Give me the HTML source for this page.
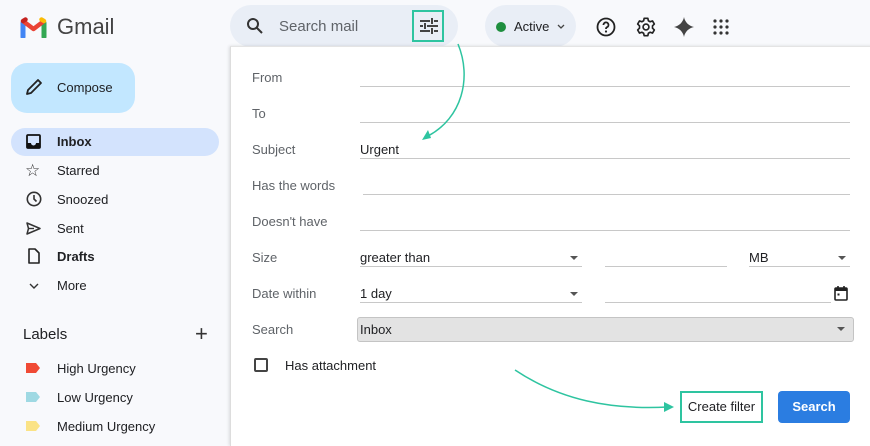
<!DOCTYPE html>
<html><head><meta charset="utf-8"><style>
*{margin:0;padding:0;box-sizing:border-box}
body{width:870px;height:442px;overflow:hidden;background:#f8f9fc;font-family:"Liberation Sans",Arial,sans-serif;position:relative;color:#202124}
.a{position:absolute}
.nav{position:absolute;left:57px;font-size:13px;color:#202124}
.ic{position:absolute;left:26px}
.lbl{position:absolute;left:252px;font-size:13px;color:#5f6368}
.ln{position:absolute;height:1px;background:#c8c8c8}
.val{position:absolute;font-size:13px;color:#202124}
.tri{position:absolute;width:0;height:0;border-left:4px solid transparent;border-right:4px solid transparent;border-top:4px solid #555}
</style></head><body>
<!-- logo -->
<svg class="a" style="left:20px;top:17px" width="27" height="21" viewBox="0 0 27 21">
<path d="M3 20V6" stroke="#4285f4" stroke-width="5" stroke-linecap="round"/>
<path d="M24 20V6" stroke="#34a853" stroke-width="5" stroke-linecap="round"/>
<path d="M3 4l10.5 8L24 4" fill="none" stroke="#ea4335" stroke-width="4.5" stroke-linejoin="round"/>
<path d="M21.5 2.5L24 4" stroke="#fbbc04" stroke-width="4.5" stroke-linecap="round"/>
<path d="M3 4L5.5 2.5" stroke="#c5221f" stroke-width="4.5" stroke-linecap="round"/>
</svg>
<div class="a" style="left:57px;top:14px;font-size:22px;color:#444">Gmail</div>
<!-- search -->
<div class="a" style="left:230px;top:5px;width:228px;height:42px;background:#e9eef6;border-radius:22px"></div>
<svg class="a" style="left:246px;top:17px" width="18" height="18" viewBox="0 0 18 18"><circle cx="7" cy="7" r="5" fill="none" stroke="#333" stroke-width="2"/><path d="M11 11l5 5" stroke="#333" stroke-width="2"/></svg>
<div class="a" style="left:279px;top:18px;font-size:15px;color:#5f6368">Search mail</div>
<div class="a" style="left:412px;top:10px;width:32px;height:32px;border:2px solid #2ec4a0"></div>
<svg class="a" style="left:420px;top:18px" width="18" height="16" viewBox="0 0 18 16" stroke="#444" stroke-width="2"><path d="M0 3h10M14 3h4M12 0v6M0 8h3M7 8h11M5 5v6M0 13h10M14 13h4M12 10v6"/></svg>
<!-- active -->
<div class="a" style="left:485px;top:5px;width:91px;height:42px;background:#e9eef6;border-radius:22px"></div>
<div class="a" style="left:496px;top:22px;width:10px;height:10px;border-radius:50%;background:#1e8e3e"></div>
<div class="a" style="left:514px;top:19px;font-size:13px;color:#202124">Active</div>
<svg class="a" style="left:557px;top:24px" width="8" height="5"><path d="M1 1l3 3 3-3" fill="none" stroke="#444" stroke-width="1.3"/></svg>
<svg class="a" style="left:596px;top:17px" width="20" height="20" viewBox="0 0 20 20"><circle cx="10" cy="10" r="8.5" fill="none" stroke="#222" stroke-width="1.8"/><path d="M7.5 8a2.5 2.5 0 1 1 3.5 2.2c-.8.4-1 .9-1 1.8" fill="none" stroke="#222" stroke-width="1.8"/><circle cx="10" cy="14.5" r="1.1" fill="#222"/></svg>
<svg class="a" style="left:635px;top:16px" width="22" height="22" viewBox="0 0 24 24">
<g fill="none" stroke="#222" stroke-width="1.8" stroke-linejoin="round">
<path d="M10 2.5h4l.6 2.7 1.9 1.1 2.6-.9 2 3.4-2 1.9v2.6l2 1.9-2 3.4-2.6-.9-1.9 1.1-.6 2.7h-4l-.6-2.7-1.9-1.1-2.6.9-2-3.4 2-1.9v-2.6l-2-1.9 2-3.4 2.6.9 1.9-1.1z"/>
<circle cx="12" cy="12" r="3.2"/></g></svg>
<svg class="a" style="left:674px;top:17px" width="20" height="20" viewBox="0 0 20 20"><path d="M10 0C10.8 5 15 9.2 20 10 15 10.8 10.8 15 10 20 9.2 15 5 10.8 0 10 5 9.2 9.2 5 10 0z" fill="#444"/></svg>
<svg class="a" style="left:713px;top:19px" width="16" height="16" viewBox="0 0 16 16" fill="#333"><circle cx="2" cy="2" r="1.6"/><circle cx="8" cy="2" r="1.6"/><circle cx="14" cy="2" r="1.6"/><circle cx="2" cy="8" r="1.6"/><circle cx="8" cy="8" r="1.6"/><circle cx="14" cy="8" r="1.6"/><circle cx="2" cy="14" r="1.6"/><circle cx="8" cy="14" r="1.6"/><circle cx="14" cy="14" r="1.6"/></svg>
<div class="a" style="left:230px;top:46px;width:640px;height:1px;background:#e4e4e4"></div>
<!-- sidebar -->
<div class="a" style="left:11px;top:63px;width:124px;height:50px;background:#c2e7ff;border-radius:16px"></div>
<svg class="a" style="left:25px;top:78px" width="18" height="18" viewBox="0 0 18 18"><path d="M2 16l1-4L13 2l3 3L6 15z" fill="none" stroke="#222" stroke-width="1.8" stroke-linejoin="round"/></svg>
<div class="a" style="left:57px;top:80px;font-size:13px;color:#202124">Compose</div>
<div class="a" style="left:11px;top:128px;width:208px;height:28px;background:#d3e3fd;border-radius:14px"></div>
<svg class="ic" style="top:134px" width="15" height="15" viewBox="0 0 15 15"><rect x="1" y="1" width="13" height="13" rx="1" fill="none" stroke="#111" stroke-width="1.8"/><path d="M1 9h4a2.5 2.5 0 0 0 5 0h4v5H1z" fill="#111"/></svg>
<div class="nav" style="top:134px;font-weight:bold">Inbox</div>
<div class="ic" style="top:161px;font-size:17px;color:#333;left:25px">☆</div>
<div class="nav" style="top:163px">Starred</div>
<svg class="ic" style="top:191px" width="16" height="16" viewBox="0 0 16 16"><circle cx="8" cy="8" r="6.7" fill="none" stroke="#333" stroke-width="1.6"/><path d="M8 4v4l2.5 2.5" fill="none" stroke="#333" stroke-width="1.6"/></svg>
<div class="nav" style="top:192px">Snoozed</div>
<svg class="ic" style="top:222px" width="15" height="13" viewBox="0 0 15 13"><path d="M1 1l13 5.5L1 12l1.5-5.5z" fill="none" stroke="#333" stroke-width="1.5" stroke-linejoin="round"/><path d="M2.5 6.5H8" stroke="#333" stroke-width="1.4"/></svg>
<div class="nav" style="top:221px">Sent</div>
<svg class="ic" style="top:248px;left:28px" width="12" height="16" viewBox="0 0 12 16"><path d="M1 1h6l4 4v10H1z" fill="none" stroke="#222" stroke-width="1.6" stroke-linejoin="round"/></svg>
<div class="nav" style="top:249px;font-weight:bold">Drafts</div>
<svg class="ic" style="top:283px;left:29px" width="10" height="6"><path d="M1 1l4 4 4-4" fill="none" stroke="#333" stroke-width="1.4"/></svg>
<div class="nav" style="top:278px">More</div>
<div class="a" style="left:23px;top:326px;font-size:15px;color:#202124">Labels</div>
<div class="a" style="left:195px;top:321px;font-size:22px;color:#333;font-weight:300">+</div>
<svg class="ic" style="top:363px" width="14" height="10"><path d="M0 0h10l4 5-4 5H0z" fill="#f04a35"/></svg>
<div class="nav" style="top:361px">High Urgency</div>
<svg class="ic" style="top:392px" width="14" height="10"><path d="M0 0h10l4 5-4 5H0z" fill="#9fd9e3"/></svg>
<div class="nav" style="top:390px">Low Urgency</div>
<svg class="ic" style="top:421px" width="14" height="10"><path d="M0 0h10l4 5-4 5H0z" fill="#fbe386"/></svg>
<div class="nav" style="top:419px">Medium Urgency</div>
<!-- panel -->
<div class="a" style="left:230px;top:46px;width:645px;height:400px;background:#fff;border-left:1px solid #ddd;border-top:1px solid #e4e4e4;box-shadow:-1px 0 3px rgba(0,0,0,.12)"></div>
<div class="lbl" style="top:70px">From</div><div class="ln" style="left:360px;top:86px;width:490px"></div>
<div class="lbl" style="top:106px">To</div><div class="ln" style="left:360px;top:122px;width:490px"></div>
<div class="lbl" style="top:142px">Subject</div><div class="val" style="left:360px;top:142px">Urgent</div><div class="ln" style="left:360px;top:158px;width:490px"></div>
<div class="lbl" style="top:178px">Has the words</div><div class="ln" style="left:363px;top:194px;width:487px"></div>
<div class="lbl" style="top:214px">Doesn't have</div><div class="ln" style="left:360px;top:230px;width:490px"></div>
<div class="lbl" style="top:250px">Size</div>
<div class="val" style="left:360px;top:250px">greater than</div><div class="tri" style="left:570px;top:256px"></div><div class="ln" style="left:360px;top:266px;width:222px"></div>
<div class="ln" style="left:605px;top:266px;width:122px"></div>
<div class="val" style="left:749px;top:250px">MB</div><div class="tri" style="left:838px;top:256px"></div><div class="ln" style="left:749px;top:266px;width:101px"></div>
<div class="lbl" style="top:286px">Date within</div>
<div class="val" style="left:360px;top:286px">1 day</div><div class="tri" style="left:570px;top:292px"></div><div class="ln" style="left:360px;top:302px;width:222px"></div>
<div class="ln" style="left:605px;top:302px;width:226px"></div>
<svg class="a" style="left:834px;top:285px" width="14" height="16" viewBox="0 0 14 16"><rect x="1" y="3" width="12" height="12" rx="1" fill="none" stroke="#222" stroke-width="1.6"/><path d="M1 3h12v3H1z" fill="#222"/><path d="M4 1v3M10 1v3" stroke="#222" stroke-width="1.6"/><rect x="3.5" y="8.5" width="2" height="2" fill="#222"/></svg>
<div class="lbl" style="top:322px">Search</div>
<div class="a" style="left:357px;top:317px;width:497px;height:25px;background:#e3e3e3;border:1px solid #c4c4c4;border-radius:3px"></div>
<div class="val" style="left:360px;top:322px">Inbox</div><div class="tri" style="left:837px;top:327px"></div>
<div class="a" style="left:254px;top:358px;width:14px;height:14px;border:2px solid #444;border-radius:2px"></div>
<div class="a" style="left:285px;top:358px;font-size:13px;color:#202124">Has attachment</div>
<div class="a" style="left:680px;top:391px;width:83px;height:32px;border:2px solid #2ec4a0;font-size:13px;color:#202124;text-align:center;line-height:28px">Create filter</div>
<div class="a" style="left:778px;top:391px;width:72px;height:32px;background:#2b7de1;border-radius:4px;color:#fff;font-size:13px;font-weight:bold;text-align:center;line-height:32px">Search</div>
<!-- arrows -->
<svg class="a" style="left:0;top:0" width="870" height="442">
<path d="M458 44C472 78 462 118 428 136" fill="none" stroke="#2ec4a0" stroke-width="1.5"/>
<path d="M422 140l6-10 3 8z" fill="#2ec4a0"/>
<path d="M515 370C560 400 610 410 668 407" fill="none" stroke="#2ec4a0" stroke-width="1.5"/>
<path d="M674 407l-10-5v10z" fill="#2ec4a0"/>
</svg>
</body></html>
